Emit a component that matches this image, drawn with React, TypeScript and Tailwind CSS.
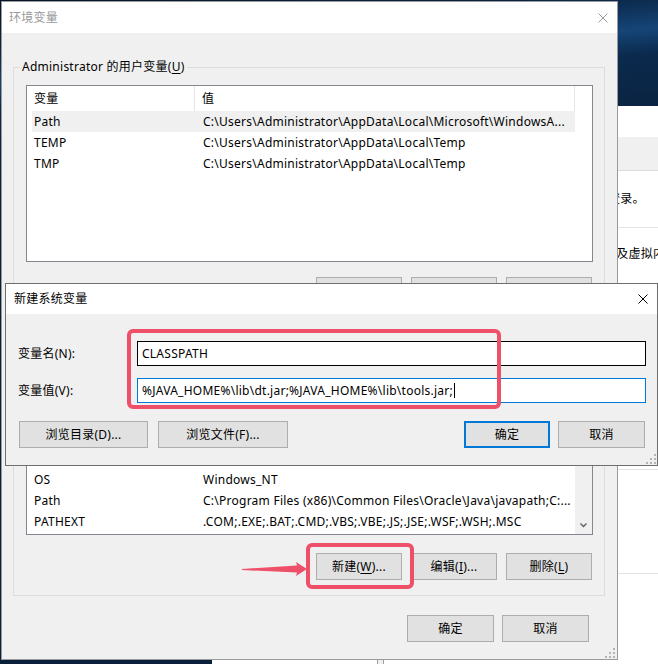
import React from "react";

const userVars = [
  ["Path", "C:\\Users\\Administrator\\AppData\\Local\\Microsoft\\WindowsA..."],
  ["TEMP", "C:\\Users\\Administrator\\AppData\\Local\\Temp"],
  ["TMP", "C:\\Users\\Administrator\\AppData\\Local\\Temp"],
];

// list is scrolled down: only the last rows show below the dialog on top
const sysVars = [
  ["NUMBER_OF_PROCESSORS", "4"],
  ["OS", "Windows_NT"],
  ["Path", "C:\\Program Files (x86)\\Common Files\\Oracle\\Java\\javapath;C:..."],
  ["PATHEXT", ".COM;.EXE;.BAT;.CMD;.VBS;.VBE;.JS;.JSE;.WSF;.WSH;.MSC"],
];

const CloseIcon = ({ color }: { color: string }) => (
  <svg width="10" height="10" viewBox="0 0 10 10" className="shrink-0">
    <path d="M0.5 0.5 L9.5 9.5 M9.5 0.5 L0.5 9.5" stroke={color} strokeWidth="1" fill="none" />
  </svg>
);

const Grip = () => (
  <svg width="10" height="10" viewBox="0 0 10 10">
    {[[8, 0], [8, 4], [4, 4], [8, 8], [4, 8], [0, 8]].map(([x, y]) => (
      <rect key={`${x}-${y}`} x={x} y={y} width="2" height="2" fill="#b4b4b4" />
    ))}
  </svg>
);

const Btn = ({ children, className = "", primary = false }: { children?: React.ReactNode; className?: string; primary?: boolean }) => (
  <div
    className={`flex h-[27px] shrink-0 items-center justify-center bg-[#e1e1e1] ${
      primary ? "border-2 border-[#0078d7]" : "border border-[#adadad]"
    } ${className}`}
  >
    {children}
  </div>
);

const Key = ({ k }: { k: string }) => <span className="underline underline-offset-[2px]">{k}</span>;

const ScrollBar = () => (
  <div className="flex w-[17px] shrink-0 flex-col bg-[#f0f0f0]">
    <div className="flex h-[17px] items-center justify-center">
      <svg width="7" height="5" viewBox="0 0 7 5">
        <path d="M0.5 4.5 L3.5 1.5 L6.5 4.5" stroke="#606060" strokeWidth="1.4" fill="none" />
      </svg>
    </div>
    <div className="flex-1 px-[1px]">
      <div className="mt-[40px] h-[46px] bg-[#cdcdcd]" />
    </div>
    <div className="flex h-[17px] items-center justify-center">
      <svg width="7" height="5" viewBox="0 0 7 5">
        <path d="M0.5 0.5 L3.5 3.5 L6.5 0.5" stroke="#606060" strokeWidth="1.4" fill="none" />
      </svg>
    </div>
  </div>
);

const ListView = ({ rows, selected = -1, scrolled = false, className = "" }: { rows: string[][]; selected?: number; scrolled?: boolean; className?: string }) => (
  <div className={`flex border border-[#828790] bg-white ${className}`}>
    <div className="flex min-w-0 flex-1 flex-col pl-[5px]">
      <div className="flex h-[25px] shrink-0">
        <div className="flex w-[163px] items-center border-r border-[#e5e5e5] pl-[2px]">变量</div>
        <div className="flex flex-1 items-center border-r border-[#e5e5e5] pl-[7px]">值</div>
      </div>
      <div className={`flex min-h-0 flex-1 flex-col overflow-hidden ${scrolled ? "justify-end pb-[2px]" : ""}`}>
        {rows.map(([k, v], i) => (
          <div key={k} className={`flex h-[21px] shrink-0 items-center ${i === selected ? "bg-[#f0f0f0]" : ""}`}>
            <div className="w-[164px] shrink-0 whitespace-nowrap pl-[2px]">{k}</div>
            <div className="min-w-0 flex-1 overflow-hidden whitespace-nowrap pl-[7px]">{v}</div>
          </div>
        ))}
      </div>
    </div>
    {scrolled ? <ScrollBar /> : <div className="w-[17px] shrink-0" />}
  </div>
);

export default function App() {
  return (
    <div className="relative h-[664px] w-[658px] overflow-hidden bg-[linear-gradient(175deg,#061529_0px,#0a2646_50px,#154577_85px,#0b2a4d_110px,#0a1f3a_200px)] font-['Noto_Sans','Noto_Sans_CJK_SC',sans-serif] text-[12px] leading-[16px] tracking-[0.25px] text-black">
      {/* window behind */}
      <div className="absolute bottom-0 left-[212px] right-0 top-[106px] flex bg-white">
        <div className="w-[165px] shrink-0" />
        <div className="w-[7px] shrink-0 border-x border-[#a0a0a0] bg-[#f0f0f0]" />
        <div className="flex min-w-0 flex-1 flex-col">
          <div className="h-[31px] shrink-0" />
          <div className="h-[34px] shrink-0 border-b border-[#dcdcdc] bg-[#f0f0f0]" />
          <div className="flex h-[57px] shrink-0 items-center whitespace-nowrap border-b border-[#e3e3e3] pl-[224px]">登录。</div>
          <div className="flex h-[52px] shrink-0 items-center overflow-hidden whitespace-nowrap pl-[220px]">以及虚拟内</div>
          <div className="h-[190px] shrink-0 border-b border-[#e3e3e3]" />
          <div className="h-[104px] shrink-0 border-b border-[#e3e3e3]" />
        </div>
      </div>

      {/* 环境变量 */}
      <div className="absolute left-[1px] top-[1px] flex h-[659px] w-[617px] flex-col border border-[#9a9a9a] bg-[#f0f0f0]">
        <div className="flex h-[31px] shrink-0 items-center justify-between bg-white pl-[7px] pr-[9px] text-[#999999]">
          <span>环境变量</span>
          <CloseIcon color="#999999" />
        </div>
        <div className="flex flex-1 flex-col pl-[11px] pr-[12px]">
          <fieldset className="mt-[26px] border border-[#dcdcdc] pb-[14px] pl-[12px] pr-[11px]">
            <legend className="-ml-[6px] px-[2px] leading-[16px]">
              Administrator 的用户变量(<Key k="U" />)
            </legend>
            <ListView rows={userVars} selected={0} className="mt-[10px] h-[177px]" />
            <div className="mt-[15px] flex justify-end gap-[9px] pr-[1px]">
              <Btn className="w-[86px]" />
              <Btn className="w-[86px]" />
              <Btn className="w-[86px]" />
            </div>
          </fieldset>

          <fieldset className="mt-[8px] border border-[#dcdcdc] pb-[15px] pl-[12px] pr-[11px]">
            <legend className="-ml-[6px] px-[2px] leading-[16px]">
              系统变量(<Key k="S" />)
            </legend>
            <ListView rows={sysVars} scrolled className="mt-[9px] h-[183px]" />
            <div className="mt-[18px] flex justify-end gap-[9px] pr-[1px]">
              <Btn className="w-[86px]">新建(<Key k="W" />)...</Btn>
              <Btn className="w-[86px]">编辑(<Key k="I" />)...</Btn>
              <Btn className="w-[86px]">删除(<Key k="L" />)</Btn>
            </div>
          </fieldset>

          <div className="mr-[16px] mt-[19px] flex justify-end gap-[8px]">
            <Btn className="w-[87px]">确定</Btn>
            <Btn className="w-[87px]">取消</Btn>
          </div>
        </div>
        <div className="absolute bottom-[1px] right-[2px]">
          <Grip />
        </div>
      </div>

      {/* 新建系统变量 */}
      <div className="absolute left-[5px] top-[283px] flex h-[183px] w-[653px] flex-col border border-[#6e6e6e] bg-[#f0f0f0]">
        <div className="flex h-[30px] shrink-0 items-center justify-between bg-white pl-[8px] pr-[9px]">
          <span>新建系统变量</span>
          <CloseIcon color="#000000" />
        </div>
        <div className="flex flex-1 flex-col pl-[12px] pr-[11px] pt-[27px]">
          <div className="flex h-[25px] items-center">
            <div className="w-[119px] shrink-0">变量名(N):</div>
            <div className="flex h-[25px] flex-1 items-center border border-black bg-white pl-[4px]">CLASSPATH</div>
          </div>
          <div className="mt-[12px] flex h-[25px] items-center">
            <div className="w-[119px] shrink-0">变量值(V):</div>
            <div className="flex h-[25px] flex-1 items-center whitespace-nowrap border border-[#0078d7] bg-white pl-[4px]">
              %JAVA_HOME%\lib\dt.jar;%JAVA_HOME%\lib\tools.jar;
              <span className="ml-[1px] inline-block h-[15px] w-px bg-black" />
            </div>
          </div>
          <div className="mt-[18px] flex items-center pr-[1px]">
            <Btn className="ml-[1px] w-[129px]">浏览目录(D)...</Btn>
            <Btn className="ml-[10px] w-[130px]">浏览文件(F)...</Btn>
            <div className="flex-1" />
            <Btn primary className="w-[86px]">确定</Btn>
            <Btn className="ml-[8px] w-[87px]">取消</Btn>
          </div>
        </div>
        <div className="absolute bottom-[1px] right-[1px]">
          <Grip />
        </div>
      </div>

      {/* annotations */}
      <div className="absolute left-[127px] top-[329px] h-[80px] w-[374px] rounded-[6px] border-4 border-[#ef5069]" />
      <div className="absolute left-[306px] top-[543px] h-[46px] w-[108px] rounded-[6px] border-4 border-[#ef5069]" />
      <svg className="absolute left-[240px] top-[560px]" width="70" height="20" viewBox="0 0 70 20">
        <polygon points="2,9 57,5.5 56,2 67,9 56,16 57,12.5 2,10" fill="#ef5069" />
      </svg>
    </div>
  );
}
